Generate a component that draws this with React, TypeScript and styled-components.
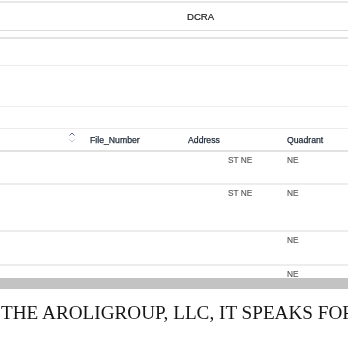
import React from "react";
import styled, { createGlobalStyle } from "styled-components";

const Global = createGlobalStyle`
  html, body { margin: 0; padding: 0; background: #fff; }
  body { width: 348px; height: 348px; overflow: hidden; }
`;

const Page = styled.div`
  display: flex;
  flex-direction: column;
  width: 348px;
  overflow: hidden;
  font-family: "Liberation Sans", Arial, sans-serif;
  will-change: transform;
`;

const TopBar = styled.div`
  height: 27px;
  margin-top: 1px;
  border-top: 2px solid #e8e8e8;
  border-bottom: 1px solid #dcdcdc;
  display: flex;
  align-items: center;
  padding-left: 187px;
  font-size: 9.6px;
  color: #1a1a1a;
  -webkit-text-stroke: 0.2px #1a1a1a;
`;

const Spacer = styled.div`
  height: 6px;
  border-bottom: 2px solid #e4e4e4;
`;

const Band = styled.div<{ h: number }>`
  height: ${(p) => p.h}px;
  border-bottom: 1px solid #ececec;
`;

const Grid = styled.div<{ h: number; head?: boolean; last?: boolean }>`
  display: grid;
  grid-template-columns: 68px 22px 98px 99px 61px;
  height: ${(p) => p.h}px;
  border-bottom: ${(p) =>
    p.last ? "none" : p.head ? "2px solid #e2e2e2" : "2px solid #ededed"};
`;

const HeadCell = styled.div`
  display: flex;
  align-items: center;
  font-size: 8.7px;
  color: #1c2736;
  -webkit-text-stroke: 0.25px #1c2736;
`;

const Cell = styled.div`
  padding-top: 4px;
  font-size: 8.3px;
  line-height: 9px;
  color: #5a5a5a;
  -webkit-text-stroke: 0.15px #5a5a5a;
`;

const AddrCell = styled(Cell)`
  padding-left: 40px;
`;

const SortIcon = styled.svg`
  width: 8px;
  height: 11px;
  margin-top: -5px;
`;

const ScrollBar = styled.div`
  height: 11px;
  background: #c3c3c3;
`;

const Footer = styled.div`
  padding: 13px 0 0 1px;
  font-family: "Liberation Serif", "Times New Roman", serif;
  font-size: 19.2px;
  color: #151515;
  white-space: nowrap;
  overflow: hidden;
`;

const rows = [
  { h: 31, addr: "ST NE", q: "NE" },
  { h: 45, addr: "ST NE", q: "NE" },
  { h: 32, addr: "", q: "NE" },
  { h: 12, addr: "", q: "NE", last: true },
];

export default function App() {
  return (
    <>
      <Global />
      <Page>
        <TopBar>DCRA</TopBar>
        <Spacer />
        <Band h={26} />
        <Band h={40} />
        <Band h={21} />
        <Grid h={21} head>
          <HeadCell />
          <HeadCell>
            <SortIcon viewBox="0 0 8 11">
              <path d="M1.5 3.5 L4 1 L6.5 3.5" fill="none" stroke="#52607a" strokeWidth="1" />
              <path d="M1.5 7.5 L4 10 L6.5 7.5" fill="none" stroke="#b6c0d2" strokeWidth="1" />
            </SortIcon>
          </HeadCell>
          <HeadCell>File_Number</HeadCell>
          <HeadCell>Address</HeadCell>
          <HeadCell>Quadrant</HeadCell>
        </Grid>
        {rows.map((r, i) => (
          <Grid key={i} h={r.h} last={r.last}>
            <Cell />
            <Cell />
            <Cell />
            <AddrCell>{r.addr}</AddrCell>
            <Cell>{r.q}</Cell>
          </Grid>
        ))}
        <ScrollBar />
        <Footer>THE AROLIGROUP, LLC, IT SPEAKS FOR</Footer>
      </Page>
    </>
  );
}
